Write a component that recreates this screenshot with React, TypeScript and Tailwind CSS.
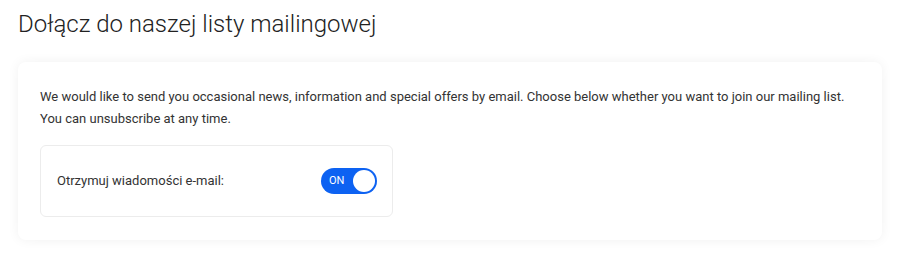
import { useState } from "react";

export default function App() {
  const [on, setOn] = useState(true);

  return (
    <div className="min-h-[257px] w-[900px] bg-white pt-[8px] font-['Roboto',sans-serif] text-[#2b2b2b]">
      <h1 className="px-[18px] text-[24px] leading-[32px] font-light text-[#222]">
        Dołącz do naszej listy mailingowej
      </h1>

      <div className="mx-[18px] mt-[22px] rounded-lg bg-white px-[22px] pt-[24px] pb-[23px] shadow-[0_0_12px_rgba(0,0,0,0.06)]">
        <p className="text-[13px] leading-[22px] text-[#333]">
          We would like to send you occasional news, information and special offers by email. Choose below whether you want to join our mailing list.
          <br />
          You can unsubscribe at any time.
        </p>

        <div className="mt-[15px] flex h-[72px] w-[353px] items-center justify-between rounded-md border border-[#ececec] pl-[16px] pr-[15px]">
          <span className="text-[13px] text-[#333]">Otrzymuj wiadomości e-mail:</span>
          <button
            onClick={() => setOn(!on)}
            className={
              on
                ? "relative flex h-[26px] w-[56px] items-center rounded-full bg-[#0d62f2] pl-[8px]"
                : "relative flex h-[26px] w-[56px] items-center rounded-full bg-gray-300 pl-[8px]"
            }
          >
            <span className="text-[11px] text-white">{on ? "ON" : ""}</span>
            <span
              className={
                on
                  ? "absolute right-[2px] top-[2px] h-[22px] w-[22px] rounded-full bg-white"
                  : "absolute left-[2px] top-[2px] h-[22px] w-[22px] rounded-full bg-white"
              }
            />
          </button>
        </div>
      </div>
    </div>
  );
}
